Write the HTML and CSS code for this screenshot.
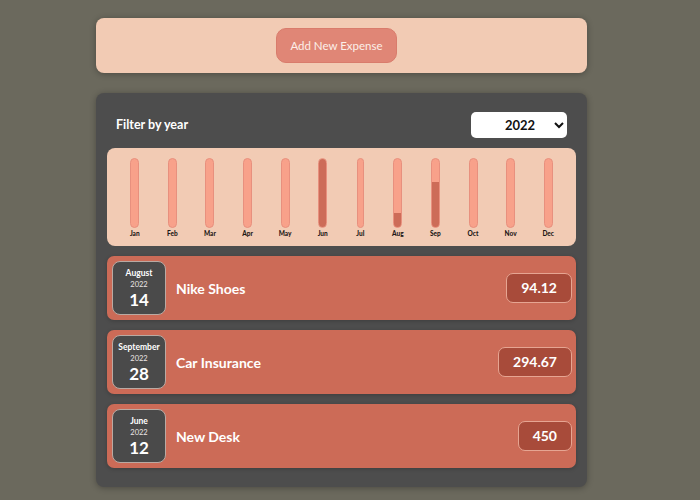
FILE: index.html
```html
<!DOCTYPE html>
<html lang="en">
<head>
<meta charset="utf-8">
<title>Expenses</title>
<link rel="stylesheet" href="styles.css">
</head>
<body>
  <div class="new-expense">
    <button class="add-btn" type="button">Add New Expense</button>
  </div>

  <div class="expenses">
    <div class="filter">
      <label class="filter-label">Filter by year</label>
      <select class="filter-select">
        <option>2022</option>
        <option>2021</option>
        <option>2020</option>
      </select>
    </div>

    <div class="chart">
      <div class="chart-bar"><div class="bar"><div class="fill" style="height:0%"></div></div><div class="bar-label">Jan</div></div>
      <div class="chart-bar"><div class="bar"><div class="fill" style="height:0%"></div></div><div class="bar-label">Feb</div></div>
      <div class="chart-bar"><div class="bar"><div class="fill" style="height:0%"></div></div><div class="bar-label">Mar</div></div>
      <div class="chart-bar"><div class="bar"><div class="fill" style="height:0%"></div></div><div class="bar-label">Apr</div></div>
      <div class="chart-bar"><div class="bar"><div class="fill" style="height:0%"></div></div><div class="bar-label">May</div></div>
      <div class="chart-bar"><div class="bar"><div class="fill" style="height:100%"></div></div><div class="bar-label">Jun</div></div>
      <div class="chart-bar narrow"><div class="bar"><div class="fill" style="height:0%"></div></div><div class="bar-label">Jul</div></div>
      <div class="chart-bar"><div class="bar"><div class="fill" style="height:20.9%"></div></div><div class="bar-label">Aug</div></div>
      <div class="chart-bar"><div class="bar"><div class="fill" style="height:65.5%"></div></div><div class="bar-label">Sep</div></div>
      <div class="chart-bar"><div class="bar"><div class="fill" style="height:0%"></div></div><div class="bar-label">Oct</div></div>
      <div class="chart-bar"><div class="bar"><div class="fill" style="height:0%"></div></div><div class="bar-label">Nov</div></div>
      <div class="chart-bar"><div class="bar"><div class="fill" style="height:0%"></div></div><div class="bar-label">Dec</div></div>
    </div>

    <ul class="expense-list">
      <li class="expense-item">
        <div class="date">
          <div class="date-month">August</div>
          <div class="date-year">2022</div>
          <div class="date-day">14</div>
        </div>
        <h2 class="expense-title">Nike Shoes</h2>
        <div class="price">94.12</div>
      </li>
      <li class="expense-item">
        <div class="date">
          <div class="date-month">September</div>
          <div class="date-year">2022</div>
          <div class="date-day">28</div>
        </div>
        <h2 class="expense-title">Car Insurance</h2>
        <div class="price">294.67</div>
      </li>
      <li class="expense-item">
        <div class="date">
          <div class="date-month">June</div>
          <div class="date-year">2022</div>
          <div class="date-day">12</div>
        </div>
        <h2 class="expense-title">New Desk</h2>
        <div class="price">450</div>
      </li>
    </ul>
  </div>
</body>
</html>
```
FILE: styles.css
```css
* { box-sizing: border-box; }

html, body {
  margin: 0;
  height: 100%;
}

body {
  background: #6b695d;
  font-family: Lato, "Liberation Sans", sans-serif;
  padding: 18px 17px 0 0;
}

.new-expense {
  width: 491px;
  margin: 0 auto 20px;
  background: #f2cbb4;
  border-radius: 8px;
  padding: 10px;
  text-align: center;
  box-shadow: 0 1px 6px rgba(0, 0, 0, 0.3);
}

.add-btn {
  font-family: inherit;
  font-size: 11.5px;
  color: #fcefe9;
  background: #e08676;
  border: 1px solid #d97c6c;
  border-radius: 10px;
  height: 35px;
  width: 121px;
  padding: 0;
  margin-right: 10px;
  cursor: pointer;
}

.expenses {
  width: 491px;
  margin: 0 auto;
  background: #4d4d4d;
  border-radius: 8px;
  padding: 19px 11px;
  box-shadow: 0 1px 6px rgba(0, 0, 0, 0.3);
}

.filter {
  display: flex;
  align-items: center;
  justify-content: space-between;
  padding: 0 9px;
  color: #fff;
}

.filter-label {
  font-weight: bold;
  font-size: 12.5px;
  margin-top: -2px;
}

.filter-select {
  width: 96px;
  height: 26px;
  font-family: inherit;
  font-weight: bold;
  font-size: 13px;
  padding: 0 0 0 30px;
  border: none;
  border-radius: 5px;
  background: #fff;
  color: #111;
}

.chart {
  margin-top: 10px;
  background: #f2cbb4;
  border-radius: 8px;
  padding: 10px 9px 7px;
  display: grid;
  grid-template-columns: repeat(12, 1fr);
}

.chart-bar {
  display: flex;
  flex-direction: column;
  align-items: center;
}

.bar {
  width: 9px;
  height: 70px;
  background: #f8a18a;
  border: 1px solid #e8907e;
  border-radius: 6px;
  overflow: hidden;
  display: flex;
  flex-direction: column;
  justify-content: flex-end;
}

.narrow .bar { width: 7px; }

.fill {
  background: #cd6c58;
  width: 100%;
}

.bar-label {
  margin-top: 1px;
  font-size: 6.5px;
  font-weight: 900;
  line-height: 10px;
  color: #1e1816;
  white-space: nowrap;
}

.expense-list {
  list-style: none;
  margin: 0;
  padding: 0;
}

.expense-item {
  margin-top: 10px;
  height: 64px;
  background: #cc6b57;
  border-radius: 7px;
  padding: 5px 4px 5px 5px;
  display: flex;
  align-items: center;
  box-shadow: 0 1px 4px rgba(0, 0, 0, 0.2);
}

.date {
  width: 54px;
  height: 54px;
  background: #4a4a4a;
  border: 1px solid #b9aaa3;
  border-radius: 8px;
  color: #fff;
  display: flex;
  flex-direction: column;
  align-items: center;
  justify-content: center;
}

.date-month {
  font-size: 8.5px;
  font-weight: bold;
  line-height: 11px;
}

.date-year {
  font-size: 7.5px;
  line-height: 11px;
  color: #ece6e4;
}

.date-day {
  font-size: 17px;
  font-weight: bold;
  line-height: 19px;
}

.expense-title {
  flex: 1;
  margin: 0 0 0 10px;
  font-size: 14px;
  font-weight: bold;
  color: #fff;
}

.price {
  font-size: 14px;
  font-weight: bold;
  color: #fff;
  background: #a84b3a;
  border: 1px solid #e6a592;
  border-radius: 7px;
  height: 30px;
  line-height: 28px;
  padding: 0 14px;
}
```
